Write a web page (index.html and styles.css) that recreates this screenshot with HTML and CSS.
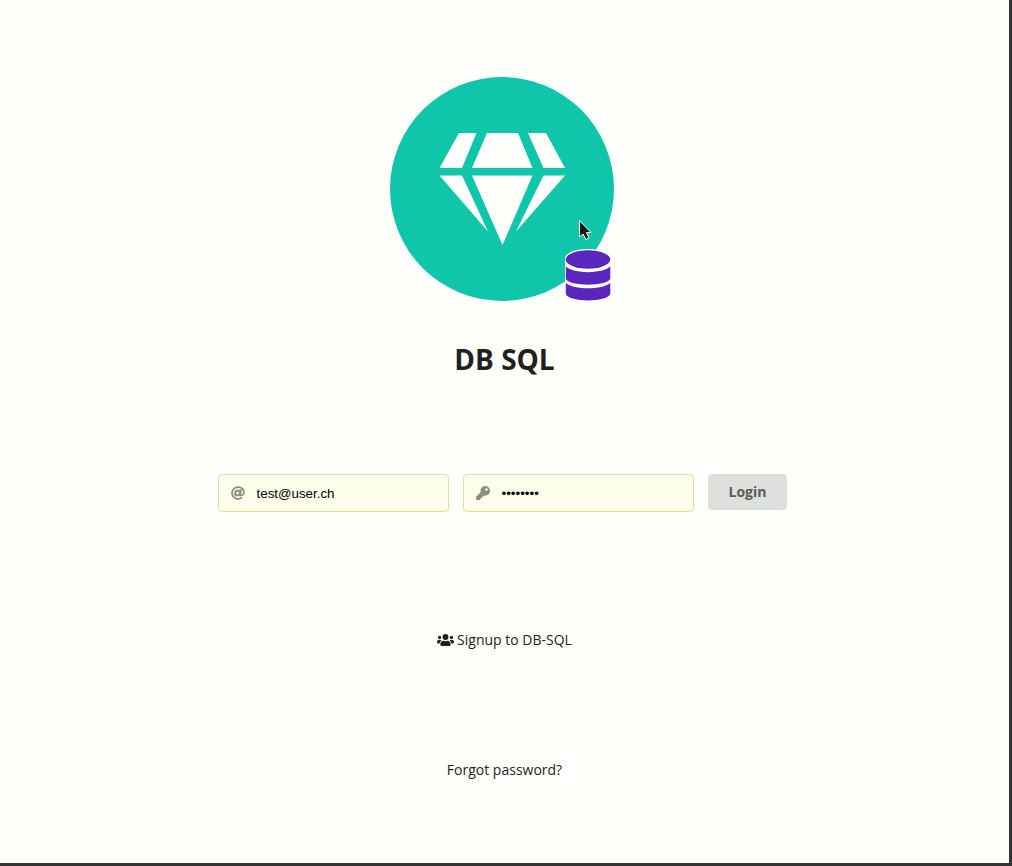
FILE: index.html
```html
<!DOCTYPE html>
<html lang="en">
<head>
<meta charset="utf-8">
<meta name="viewport" content="width=device-width, initial-scale=1">
<title>DB SQL</title>
<link rel="stylesheet" href="styles.css">
</head>
<body>
<main class="page">
  <div class="logo">
    <svg class="logo-art" viewBox="0 0 224 224" aria-hidden="true">
      <circle cx="112" cy="112" r="112" fill="#0fc6aa"/>
      <g fill="#fffffc">
        <path d="M69 56H86.500L72 91H49.500Z"/>
        <path d="M97 56H128L142.500 91H82Z"/>
        <path d="M138 56H156L175 91H153.500Z"/>
        <path d="M49.500 98.500H72L98 154.500Z"/>
        <path d="M82 98.500H142.500L112.500 168Z"/>
        <path d="M153.500 98.500H175L126 154.500Z"/>
      </g>
      <path d="M175 182C175 168.500 221 168.500 221 182V216C221 226.500 175 226.500 175 216Z" fill="#fffffc"/>
      <g fill="#5b25c0">
        <ellipse cx="198" cy="182.500" rx="22.300" ry="9.300"/>
        <path d="M175.800 189.500C184 197 212 197 220.300 189.500V202C216 209.500 180 209.500 175.800 202Z"/>
        <path d="M175.800 206C184 213 212 213 220.300 206V217C217 225.500 179 225.500 175.800 217Z"/>
      </g>
      <path d="M189.500 143.500V160L193 157L196 162.500L199 161L196.500 155.500H201Z" fill="#171a19" stroke="#fffffc" stroke-width="1"/>
    </svg>
  </div>
  <h1 class="title">DB SQL</h1>
  <form class="login" onsubmit="return false">
    <div class="field">
      <label class="field-icon" for="email" aria-label="Email">
        <svg class="glyph" viewBox="0 0 512 512"><path d="M256 8C118.900 8 8 119 8 256s111 248 248 248c52.500 0 104-17 146-48 11-8 13-23 4-33l-10-13c-8-10-22-11-32-4-31 22-69 34-108 34-101 0-184-82-184-184S154 72 256 72c100 0 184 58 184 160 0 39-21 74-53 78-17-1-17-13-13-30l23-122c3-15-8-29-24-29h-45c-12 0-22 9-23 20-15-18-40-22-59-22-74 0-137 62-137 151 0 65 37 106 96 106 27 0 57-16 75-39 9 34 41 34 71 34 108 0 151-71 151-147C504 96 394 8 256 8zm-22 304c-22 0-36-15-36-39 0-44 30-71 57-71 23 0 36 16 36 39 0 41-28 71-57 71z"/></svg>
      </label>
      <input class="field-input" id="email" type="text" value="test@user.ch" autocomplete="off">
    </div>
    <div class="field">
      <label class="field-icon" for="password" aria-label="Password">
        <svg class="glyph" viewBox="0 0 512 512"><path d="M512 176c0 97-79 176-176 176-11 0-22-1-33-3l-24 27a24 24 0 0 1-18 8h-37v40a24 24 0 0 1-24 24h-40v40a24 24 0 0 1-24 24H24a24 24 0 0 1-24-24v-78c0-6 3-12 7-17l162-162A176 176 0 0 1 336 0c97 0 176 79 176 176zM336 128a48 48 0 1 0 96 0 48 48 0 0 0-96 0z"/></svg>
      </label>
      <input class="field-input" id="password" type="password" value="password" autocomplete="off">
    </div>
    <button class="submit" type="submit">Login</button>
  </form>
  <a class="link signup" href="#signup">
    <svg class="users" viewBox="0 0 640 512" aria-hidden="true"><path d="M96 224a64 64 0 1 0 0-128 64 64 0 0 0 0 128zm448 0a64 64 0 1 0 0-128 64 64 0 0 0 0 128zm32 32h-64c-18 0-34 7-45 18 40 22 69 62 75 110h66c18 0 32-14 32-32v-32c0-35-29-64-64-64zm-256 0a112 112 0 1 0 0-224 112 112 0 0 0 0 224zm77 32h-8c-42 20-96 20-138 0h-8c-64 0-115 52-115 115v29c0 27 21 48 48 48h288c27 0 48-21 48-48v-29c0-63-51-115-115-115zm-224-14c-11-11-27-18-45-18H64c-35 0-64 29-64 64v32c0 18 14 32 32 32h66c6-48 35-88 75-110z"/></svg>
    Signup to DB-SQL</a>
  <a class="link forgot" href="#forgot">Forgot password?</a>
</main>
</body>
</html>
```
FILE: styles.css
```css
* {
  box-sizing: border-box;
}

body {
  margin: 0;
  background: #fffffc;
  color: #1f211e;
  font: 14px/20px "Open Sans", "Noto Sans", sans-serif;
}

.page {
  display: flex;
  flex-direction: column;
  align-items: center;
  min-height: 100vh;
  padding: 77px 16px 0;
  border-right: 3px solid #343434;
  border-bottom: 3px solid #343434;
}

.logo {
  margin-right: 5px;
}

.logo-art {
  display: block;
  width: 224px;
  height: 224px;
}

.title {
  margin: 40px 0 0;
  font-size: 28px;
  line-height: 36px;
  font-weight: 700;
}

.login {
  display: flex;
  flex-wrap: wrap;
  justify-content: center;
  align-items: flex-start;
  gap: 14px;
  width: 100%;
  margin-top: 97px;
  padding-right: 4px;
}

.field {
  display: flex;
  align-items: center;
  flex: 0 1 231px;
  height: 38px;
  border: 1px solid #dfe0a0;
  border-radius: 4px;
  background: #fdffeb;
}

.field-icon {
  display: flex;
  flex: none;
  padding-left: 12px;
}

.glyph {
  width: 14px;
  height: 14px;
  fill: #8c8e84;
}

.field-input {
  flex: 1;
  min-width: 0;
  height: 36px;
  padding: 0 12px;
  border: 0;
  outline: 0;
  background: transparent;
  color: #000;
  font-family: "Liberation Sans", Arial, sans-serif;
}

.submit {
  height: 36px;
  padding: 0 21px;
  border: 0;
  border-radius: 4px;
  background: #dee0dd;
  color: #5a5c59;
  font: 700 14px/14px "Open Sans", "Noto Sans", sans-serif;
}

.link {
  color: inherit;
  text-decoration: none;
}

.signup {
  display: flex;
  align-items: center;
  gap: 3px;
  margin-top: 118px;
}

.users {
  width: 17px;
  height: 14px;
  fill: currentColor;
}

.forgot {
  margin-top: 110px;
}
```
